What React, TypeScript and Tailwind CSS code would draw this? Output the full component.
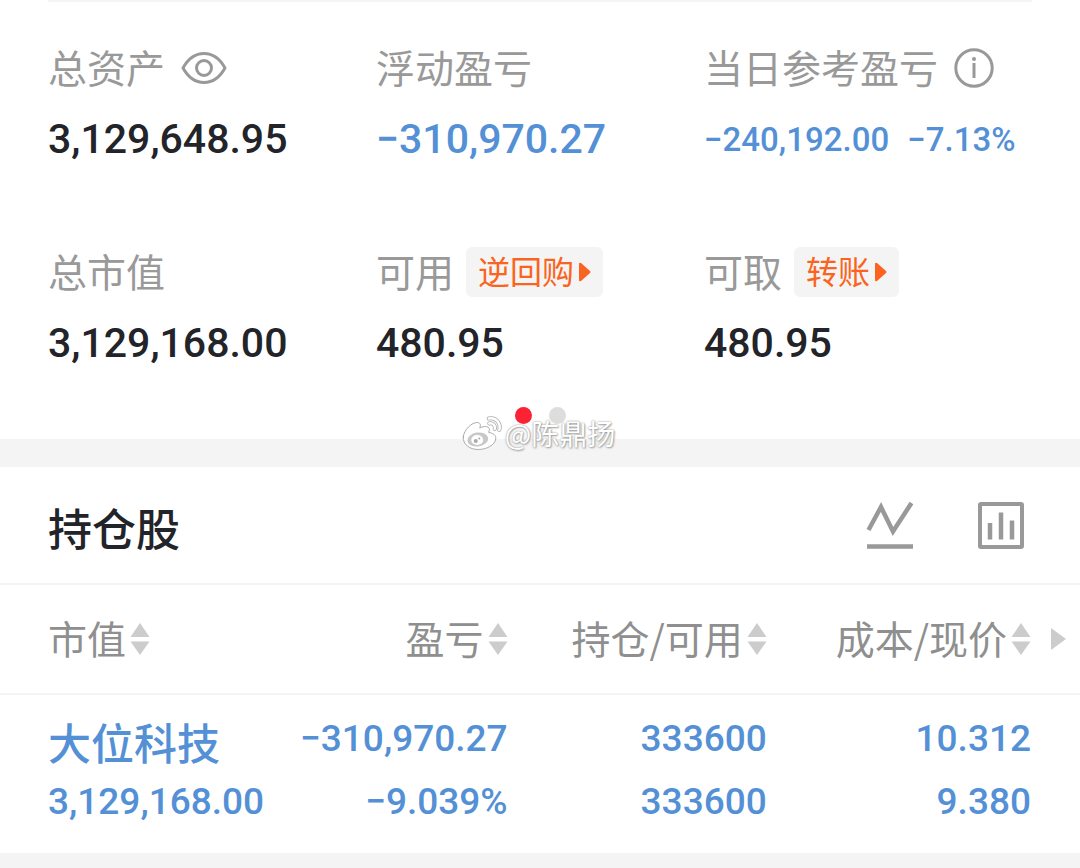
import React from 'react';

const cjk = "font-['Noto_Sans_CJK_SC',sans-serif]";
const num = "font-['Roboto','Noto_Sans_CJK_SC',sans-serif]";

const EyeIcon = () => (
  <svg viewBox="0 0 46 34" className="w-[46px] h-[34px]" fill="none" stroke="#999" strokeWidth="3">
    <path d="M2 17C7 8 14 2.500 23 2.500S39 8 44 17C39 26 32 31.500 23 31.500S7 26 2 17Z" strokeLinejoin="round" />
    <circle cx="23" cy="17" r="7.500" />
  </svg>
);

const InfoIcon = () => (
  <svg viewBox="0 0 40 40" className="w-10 h-10" fill="none" stroke="#999" strokeWidth="3">
    <circle cx="20" cy="20" r="18.200" />
    <path d="M20 15v15" strokeWidth="3" />
    <circle cx="20" cy="11" r="2" fill="#999" stroke="none" />
  </svg>
);

const TrendIcon = () => (
  <svg viewBox="0 0 48 48" className="w-12 h-12" fill="none" stroke="#999" strokeWidth="4.500">
    <path d="M2.500 29L15 6 27 30.500 45.500 2" />
    <path d="M1 45.500h46" strokeWidth="4.500" />
  </svg>
);

const ChartIcon = () => (
  <svg viewBox="0 0 48 48" className="w-12 h-12" fill="none" stroke="#999" strokeWidth="4">
    <rect x="3" y="3" width="42" height="43" rx="1" />
    <path d="M13 22v16.500M24 11.500v27M35 19.500v19" strokeWidth="4.500" />
  </svg>
);

const SortIcon = () => (
  <svg viewBox="0 0 20 34" className="w-5 h-[34px] shrink-0" fill="#ccc">
    <path d="M10 1l9.500 14H.5z" />
    <path d="M10 33L.5 19.500h19z" />
  </svg>
);

const WeiboIcon = () => (
  <svg viewBox="0 0 42 36" className="w-[42px] h-9" fill="none" strokeLinecap="round" strokeLinejoin="round">
    <path
      d="M2.500 22C3 15 11 7 17 7.500C20 8 20 10.500 19 13C23 11 27.500 11 28.500 13.500C29 15 28 17 28 17.500C32 18 35.500 20 35 24C34 30 26 34.500 17.500 34.500C9 34.500 2 29.500 2.500 22Z"
      fill="#fff"
      stroke="#aaa"
    />
    <ellipse cx="17" cy="24.500" rx="10.500" ry="7" fill="#c8c8c8" transform="rotate(-8 17 24.500)" />
    <ellipse cx="16.500" cy="25" rx="6" ry="5" fill="#fff" />
    <circle cx="15" cy="26" r="2" fill="#aaa" />
    <circle cx="18.500" cy="23.500" r="1" fill="#aaa" />
    {/* Signal arcs: grey outline with a white core */}
    <path d="M28 3.500C35 2 40.500 8 38.500 15M28.500 8.500C32 7.500 35 10.500 34 14" stroke="#aaa" strokeWidth="4" />
    <path d="M28 3.500C35 2 40.500 8 38.500 15M28.500 8.500C32 7.500 35 10.500 34 14" stroke="#fff" strokeWidth="2.500" />
  </svg>
);

const ActionButton = ({ label }: { label: string }) => (
  <button className="flex items-center h-[50px] ml-3 px-3 rounded-md bg-[#f4f4f4] text-[32px] leading-[46px] text-[#fa6420]">
    <span className="pb-1">{label}</span>
    <svg viewBox="0 0 12 20" className="w-3 h-5 ml-[5px]" fill="#fa6420">
      <path d="M0 2Q0 0 2 1L11 9Q12 10 11 11L2 19Q0 20 0 18Z" />
    </svg>
  </button>
);

const stats = [
  { label: '总资产', value: '3,129,648.95', extra: <EyeIcon /> },
  { label: '浮动盈亏', value: '−310,970.27', loss: true },
  { label: '当日参考盈亏', value: '−240,192.00', rate: '−7.13%', loss: true, extra: <InfoIcon /> },
  { label: '总市值', value: '3,129,168.00' },
  { label: '可用', value: '480.95', action: '逆回购' },
  { label: '可取', value: '480.95', action: '转账' },
];

const columns = ['市值', '盈亏', '持仓/可用', '成本/现价'];

const holdings = [
  {
    name: '大位科技',
    marketValue: '3,129,168.00',
    cells: [
      ['−310,970.27', '−9.039%'],
      ['333600', '333600'],
      ['10.312', '9.380'],
    ],
  },
];

const Summary = () => (
  <section className="relative">
    <div className="mx-12 border-t-2 border-[#f4f4f4]" />
    <div className="grid grid-cols-3 gap-y-[84px] px-12 pt-[41px]">
      {stats.map((stat) => (
        <div key={stat.label} className="whitespace-nowrap">
          <div className="flex items-center h-[50px] text-[39px] leading-[46px] text-[#999]">
            <span className="pb-1">{stat.label}</span>
            {stat.extra && <span className="ml-4">{stat.extra}</span>}
            {stat.action && <ActionButton label={stat.action} />}
          </div>
          <div
            className={`${num} mt-5 flex items-center h-[50px] pt-1 font-medium ${
              stat.loss ? 'text-[#5490d6]' : 'text-[#222429]'
            } ${stat.rate ? 'text-[33px]' : 'text-[41px]'}`}
          >
            <span>{stat.value}</span>
            {stat.rate && <span className="ml-[18px]">{stat.rate}</span>}
          </div>
        </div>
      ))}
    </div>

    {/* Page dots */}
    <div className="flex justify-center gap-[17px] pt-10 pb-[15px]">
      <span className="size-[17px] rounded-full bg-[#fb2233]" />
      <span className="size-[17px] rounded-full bg-[#ddd]" />
    </div>

    {/* Watermark */}
    <div className="absolute z-10 left-1/2 -bottom-4 -translate-x-1/2 flex items-center gap-[2px] h-11 pr-1 whitespace-nowrap text-[28px] leading-10 text-white [text-shadow:0_0_2px_#888,1px_1px_2px_#aaa]">
      <WeiboIcon />
      <span>@陈鼎扬</span>
    </div>
  </section>
);

const Holdings = () => (
  <section>
    <div className="flex items-center justify-between h-[116px] pl-12 pr-[55px]">
      <h2 className="pt-1 text-[44px] font-medium text-[#222429]">持仓股</h2>
      <div className="flex gap-[63px]">
        <button aria-label="走势">
          <TrendIcon />
        </button>
        <button aria-label="图表">
          <ChartIcon />
        </button>
      </div>
    </div>

    <table className="w-full table-fixed border-collapse whitespace-nowrap">
      <colgroup>
        <col className="w-[25%]" />
        <col className="w-[22%]" />
        <col className="w-[24%]" />
        <col />
        <col className="w-[49px]" />
      </colgroup>
      <thead>
        <tr className="h-[110px] border-y-2 border-[#f4f4f4] text-[39px] leading-[46px] text-[#8f8f8f]">
          {columns.map((column, i) => (
            <th key={column} className={`p-0 font-normal ${i === 0 ? 'pl-12' : ''}`}>
              <button className={`flex w-full items-center gap-1 ${i === 0 ? '' : 'justify-end'}`}>
                <span className="pb-1">{column}</span>
                <SortIcon />
              </button>
            </th>
          ))}
          <th className="p-0">
            <button aria-label="更多" className="flex w-full items-center pl-5">
              <svg viewBox="0 0 16 22" className="w-4 h-[22px]" fill="#ccc">
                <path d="M0 0l15 11L0 22z" />
              </svg>
            </button>
          </th>
        </tr>
      </thead>
      <tbody>
        {holdings.map((item) => (
          <tr key={item.name} className="h-[159px] align-bottom text-[#5490d6] font-medium">
            <td className="p-0 pl-12 pb-5">
              <div className="pb-[6px] text-[43px] leading-[46px]">{item.name}</div>
              <div className={`${num} text-[37px] leading-[63px]`}>{item.marketValue}</div>
            </td>
            {item.cells.map(([top, bottom], i) => (
              <td key={i} className={`${num} p-0 pb-5 text-right text-[37px] leading-[63px]`}>
                <div>{top}</div>
                <div>{bottom}</div>
              </td>
            ))}
            <td />
          </tr>
        ))}
      </tbody>
    </table>
  </section>
);

const App = () => {
  return (
    <main className={`${cjk} min-h-screen flex flex-col bg-white`}>
      <Summary />
      <div className="h-7 bg-[#f4f4f4]" />
      <Holdings />
      <div className="grow min-h-4 bg-[#f4f4f4]" />
    </main>
  );
};

export default App;
